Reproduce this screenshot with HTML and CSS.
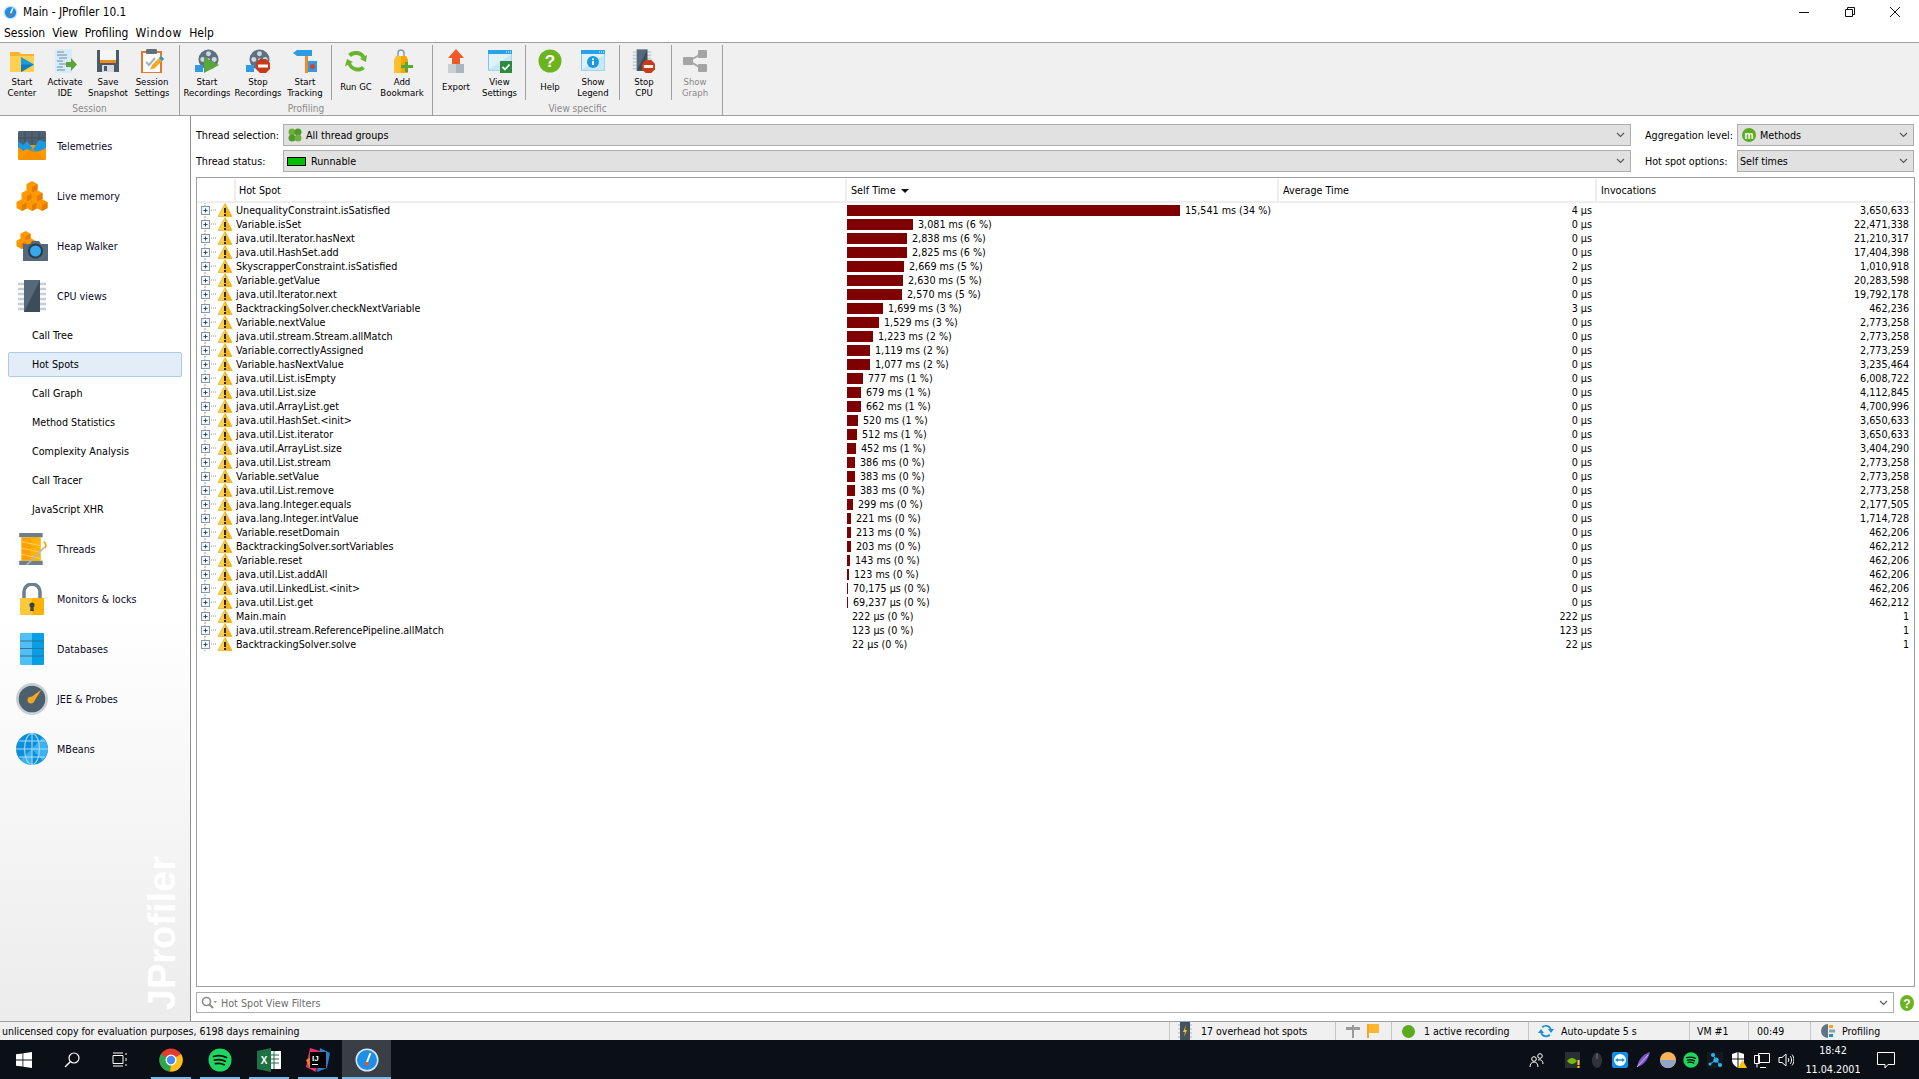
FILE: index.html
```html
<!DOCTYPE html>
<html lang="en">
<head>
<meta charset="utf-8">
<title>Main - JProfiler 10.1</title>
<link rel="stylesheet" href="styles.css">
</head>
<body>
<svg class="sprite" xmlns="http://www.w3.org/2000/svg">
  <defs>
    <symbol id="node" viewBox="0 0 37 14">
      <path d="M8 0v3M8 11v3M12 7h7" stroke="#999" stroke-width="1" stroke-dasharray="1 1" fill="none"/>
      <rect x="4.500" y="3.500" width="8" height="8" fill="#f4f6f8" stroke="#8a97a3"/>
      <path d="M6.500 7.500h4M8.500 5.500v4" stroke="#2c4a6b" fill="none"/>
      <path d="M28 0.500L35 13.500H21Z" fill="#ffd24a" stroke="#d9a21b" stroke-width=".6"/>
      <path d="M28 0.500L35 13.500H28Z" fill="#f9b312"/>
      <rect x="27" y="5" width="2" height="5" fill="#2b2b2b"/><rect x="27" y="11" width="2" height="2" fill="#2b2b2b"/>
    </symbol>
    <symbol id="cube" viewBox="0 0 12 12">
      <path d="M6 0l5.500 3v6L6 12 .5 9V3Z" fill="#ff9800"/>
      <path d="M6 6l5.500-3v6L6 12Z" fill="#e57c00"/>
    </symbol>
    <symbol id="stop" viewBox="0 0 14 14">
      <path d="M4 0h6l4 4v6l-4 4H4l-4-4V4Z" fill="#c93a1a"/>
      <rect x="2" y="5.500" width="10" height="3" fill="#fff"/>
    </symbol>
    <symbol id="reel" viewBox="0 0 22 22">
      <circle cx="11" cy="11" r="10.500" fill="#5f7180"/>
      <circle cx="11" cy="5" r="2.600" fill="#cfd8dc"/><circle cx="11" cy="17" r="2.600" fill="#cfd8dc"/>
      <circle cx="5" cy="11" r="2.600" fill="#cfd8dc"/><circle cx="17" cy="11" r="2.600" fill="#cfd8dc"/>
      <circle cx="11" cy="11" r="1.400" fill="#cfd8dc"/>
    </symbol>
    <symbol id="chip" viewBox="0 0 30 32">
      <path d="M1 4h28M1 9h28M1 14h28M1 19h28M1 24h28M1 29h28" stroke="#c4ced4" stroke-width="2.400" fill="none"/>
      <rect x="7" y="0" width="16" height="32" fill="#56697a"/>
      <path d="M23 0v32H7Z" fill="#3c4c5a"/>
    </symbol>
    <symbol id="win" viewBox="0 0 24 21">
      <rect x=".5" y=".5" width="23" height="20" fill="#dff1fb" stroke="#7cc4ee"/>
      <rect x="0" y="0" width="24" height="4" fill="#29a3e8"/>
      <path d="M18 2h1M20 2h1M22 2h1" stroke="#fff"/>
      <path d="M0 20L24 4V21H0Z" fill="#b7e0f7" opacity=".6"/>
    </symbol>
    <symbol id="chev" viewBox="0 0 9 6"><path d="M1 1l3.500 3.500L8 1" fill="none" stroke="#555" stroke-width="1.100"/></symbol>
  </defs>
</svg>

<header class="titlebar">
  <svg class="app-ico" viewBox="0 0 16 16"><circle cx="8" cy="8" r="7.500" fill="#cfe6f7"/><circle cx="8" cy="8" r="6" fill="#1f8fe6"/><path d="M10.500 3.500L8 9" stroke="#fff" stroke-width="1.600"/><circle cx="7.800" cy="10" r="1.300" fill="#e8532b"/></svg>
  <span class="title-text">Main - JProfiler 10.1</span>
  <div class="winctl">
    <svg class="wc" viewBox="0 0 12 12"><path d="M1 6.500h10" stroke="#111"/></svg>
    <svg class="wc" viewBox="0 0 12 12"><path d="M1.500 3.500h7v7h-7zM3.500 3.500v-2h7v7h-2" fill="none" stroke="#111"/></svg>
    <svg class="wc" viewBox="0 0 12 12"><path d="M1 1l10 10M11 1L1 11" stroke="#111"/></svg>
  </div>
</header>

<nav class="menubar">
  <span>Session</span><span>View</span><span>Profiling</span><span class="wide">Window</span><span>Help</span>
</nav>

<section class="toolbar">
  <div class="tgroup g-session">
    <div class="tbtns">
      <div class="tbtn w44"><svg class="ticon" viewBox="0 0 24 24"><path d="M0 3h9l2 2h13v18H0Z" fill="#f9b233"/><path d="M0 7h24v16H0Z" fill="#fdd04f"/><path d="M11 8l13 7.500-13 7.500Z" fill="#1a9ae0"/><path d="M11 15.500h13L11 23Z" fill="#0e7cc0"/></svg><span class="tlabel">Start<br>Center</span></div>
      <div class="tbtn w42"><svg class="ticon" viewBox="0 0 24 24"><rect x="2" y="0" width="17" height="24" fill="#d6ecfa"/><path d="M4 3h7M4 6h10M6 9h8M4 12h6M6 15h7M4 18h6M4 21h8" stroke="#6f8aa0"/><path d="M13 13h5V9l6 6.500-6 6.500v-4h-5Z" fill="#5aa63a"/></svg><span class="tlabel">Activate<br>IDE</span></div>
      <div class="tbtn w44"><svg class="ticon" viewBox="0 0 24 24"><path d="M1 1h22v22H1Z" fill="#4a5a68"/><rect x="4" y="1" width="16" height="10" fill="#f5f5f5"/><rect x="4" y="11" width="16" height="3" fill="#f28a1a"/><rect x="6" y="16" width="12" height="7" fill="#d5dbe0"/><rect x="8" y="17" width="3" height="5" fill="#4a5a68"/></svg><span class="tlabel">Save<br>Snapshot</span></div>
      <div class="tbtn w44"><svg class="ticon" viewBox="0 0 24 24"><rect x="2" y="3" width="19" height="21" fill="#fff" stroke="#e8762b" stroke-width="2"/><rect x="6" y="0" width="11" height="5" rx="1" fill="#5f7180"/><path d="M6 13l3 3 6-7" fill="none" stroke="#9fb2c0" stroke-width="2"/><path d="M10 21l2-5L21 7l3 3-9 9Z" fill="#f5a623"/><path d="M21 7l3 3-2 2-3-3Z" fill="#1a9ae0"/></svg><span class="tlabel">Session<br>Settings</span></div>
    </div>
    <div class="tname">Session</div>
  </div>
  <div class="tgroup g-profiling">
    <div class="tbtns">
      <div class="tbtn w54"><svg class="ticon" viewBox="0 0 24 24"><use href="#reel" x="3" y="0" width="21" height="21"/><rect x="0" y="16" width="8" height="7" fill="#2f9be0"/><path d="M9 8l15 8-15 8Z" fill="#5aa63a"/></svg><span class="tlabel">Start<br>Recordings</span></div>
      <div class="tbtn w48"><svg class="ticon" viewBox="0 0 24 24"><use href="#reel" x="3" y="0" width="21" height="21"/><rect x="0" y="16" width="8" height="7" fill="#2f9be0"/><use href="#stop" x="10" y="10" width="14" height="14"/></svg><span class="tlabel">Stop<br>Recordings</span></div>
      <div class="tbtn w46"><svg class="ticon" viewBox="0 0 24 24"><rect x="12" y="1" width="3" height="23" fill="#ef8b2c"/><path d="M0 4l4-3h15v6H4Z" fill="#2f9be0"/><rect x="15" y="12" width="9" height="11" fill="#2f9be0"/><circle cx="19.500" cy="17.500" r="2.500" fill="#d8402a"/></svg><span class="tlabel">Start<br>Tracking</span></div>
      <div class="tsep"></div>
      <div class="tbtn w48"><svg class="ticon" viewBox="0 0 24 24"><path d="M12 2a10 10 0 0 1 9 5l2-1-1 7-6-3 2-1a7 7 0 0 0-6-3 7 7 0 0 0-5 2L4 5a10 10 0 0 1 8-3ZM3 10l6 3-2 1a7 7 0 0 0 11 3l3 3a11 11 0 0 1-17-4l-3 1Z" fill="#6ab42e"/></svg><span class="tlabel">Run GC</span></div>
      <div class="tbtn w44"><svg class="ticon" viewBox="0 0 24 24"><path d="M8 9V4a3 3 0 0 1 6 0v5" fill="none" stroke="#8d9aa5" stroke-width="1.500"/><path d="M6 7h10l2 4v13H4V11Z" fill="#fcc02e"/><path d="M11 7h5l2 4v13h-7Z" fill="#f5a800"/><path d="M15 13h3v3h5v3h-5v4h-3v-4h-4v-3h4Z" fill="#5aa63a"/></svg><span class="tlabel">Add<br>Bookmark</span></div>
    </div>
    <div class="tname">Profiling</div>
  </div>
  <div class="tgroup g-view">
    <div class="tbtns">
      <div class="tbtn w46"><svg class="ticon" viewBox="0 0 24 24"><path d="M12 0l8 9h-4v6H8V9H4Z" fill="#ef5a2a"/><path d="M4 15h16v9H4Z" fill="#c8d0d6"/><path d="M12 15h8v9h-8Z" fill="#aab5bd"/></svg><span class="tlabel">Export</span></div>
      <div class="tbtn w41"><svg class="ticon" viewBox="0 0 24 24"><use href="#win" x="0" y="1" width="24" height="21"/><rect x="12" y="12" width="12" height="12" fill="#2e8b3d"/><path d="M14.500 18l2.500 2.500 4.500-5" stroke="#fff" stroke-width="1.800" fill="none"/></svg><span class="tlabel">View<br>Settings</span></div>
      <div class="tsep sep-view"></div>
      <div class="tbtn w48"><svg class="ticon" viewBox="0 0 24 24"><circle cx="12" cy="12" r="11.500" fill="#6cb41e"/><text class="q" x="12" y="18" text-anchor="middle">?</text></svg><span class="tlabel">Help</span></div>
      <div class="tbtn w38"><svg class="ticon" viewBox="0 0 24 24"><use href="#win" x="0" y="1" width="24" height="21"/><circle cx="12" cy="13" r="6" fill="#1a9ae0"/><rect x="11" y="12" width="2" height="4" fill="#fff"/><rect x="11" y="9.500" width="2" height="1.600" fill="#fff"/></svg><span class="tlabel">Show<br>Legend</span></div>
      <div class="tsep sep-legend"></div>
      <div class="tbtn w48"><svg class="ticon" viewBox="0 0 24 24"><use href="#chip" x="0" y="0" width="20" height="22"/><use href="#stop" x="10" y="11" width="13" height="13"/></svg><span class="tlabel">Stop<br>CPU</span></div>
      <div class="tsep"></div>
      <div class="tbtn w46 off"><svg class="ticon" viewBox="0 0 24 24"><path d="M6 12L18 5M6 12l12 7" stroke="#a4a4a4" stroke-width="2"/><rect x="0" y="8" width="10" height="8" rx="1" fill="#a4a4a4"/><rect x="15" y="1" width="9" height="8" rx="1" fill="#a4a4a4"/><rect x="15" y="15" width="9" height="8" rx="1" fill="#a4a4a4"/></svg><span class="tlabel">Show<br>Graph</span></div>
    </div>
    <div class="tname">View specific</div>
  </div>
</section>

<main class="main">
  <aside class="sidebar">
    <div class="nav">
      <div class="nav-item"><svg class="nav-ico" viewBox="0 0 32 32"><rect x="2" y="1" width="28" height="29" rx="1.500" fill="#ff9800"/><path d="M2 2.500a1.500 1.500 0 0 1 1.500-1.500h25a1.500 1.500 0 0 1 1.500 1.500V15H2Z" fill="#4f6170"/><path d="M9 1v14M16 1v14M23 1v14M2 8h28" stroke="#3f505e"/><path d="M2 11l5 4 4-4 6 8 6-9 7 2v6l-6 3-7 1-6-3-4 2-5-4Z" fill="#1a9ae0"/><path d="M2 30l14-12 14 12Z" fill="#f28c00" opacity=".6"/></svg><span>Telemetries</span></div>
      <div class="nav-item"><svg class="nav-ico" viewBox="0 0 32 30"><use href="#cube" x="10" y="0" width="12" height="12"/><use href="#cube" x="5" y="9" width="12" height="12"/><use href="#cube" x="15" y="9" width="12" height="12"/><use href="#cube" x="0" y="18" width="12" height="12"/><use href="#cube" x="10" y="18" width="12" height="12"/><use href="#cube" x="20" y="18" width="12" height="12"/></svg><span>Live memory</span></div>
      <div class="nav-item"><svg class="nav-ico" viewBox="0 0 32 30"><use href="#cube" x="4" y="0" width="11" height="11"/><use href="#cube" x="0" y="7" width="11" height="11"/><use href="#cube" x="9" y="7" width="11" height="11"/><path d="M7 13h7l2-3h7l2 3h7v17H7Z" fill="#56697a"/><circle cx="19.500" cy="20" r="7.500" fill="#2b3a47"/><circle cx="19.500" cy="20" r="5.500" fill="#35a8ee"/></svg><span>Heap Walker</span></div>
      <div class="nav-item"><svg class="nav-ico" viewBox="0 0 30 32"><use href="#chip" x="0" y="0" width="30" height="32"/></svg><span>CPU views</span></div>
      <ul class="sub">
        <li>Call Tree</li>
        <li class="active">Hot Spots</li>
        <li>Call Graph</li>
        <li>Method Statistics</li>
        <li>Complexity Analysis</li>
        <li>Call Tracer</li>
        <li>JavaScript XHR</li>
      </ul>
      <div class="nav-item"><svg class="nav-ico" viewBox="0 0 30 30"><rect x="3" y="0" width="22" height="4" fill="#6d7f8d"/><rect x="3" y="26" width="22" height="4" fill="#6d7f8d"/><rect x="5" y="4" width="18" height="22" fill="#ffa000"/><path d="M14 4h9v22h-9Z" fill="#ffb300"/><path d="M5 8l18 4M5 14l18 4M5 20l18 4" stroke="#ffcf5e"/><path d="M26 8c2 2 3 4 1 6" stroke="#ffa000" fill="none" stroke-width="1.500"/><path d="M10 30l17-17" stroke="#aeb8bf" stroke-width="1.500"/></svg><span>Threads</span></div>
      <div class="nav-item"><svg class="nav-ico" viewBox="0 0 30 32"><path d="M7 16V9a8 8 0 0 1 16 0v7" fill="none" stroke="#6d7f8d" stroke-width="3.500"/><rect x="3" y="15" width="24" height="17" rx="1" fill="#ffc93a"/><path d="M15 15h12v17H15Z" fill="#ffb300"/><circle cx="15" cy="22" r="2.600" fill="#36444f"/><path d="M13.800 23h2.400l.8 5h-4Z" fill="#36444f"/></svg><span>Monitors &amp; locks</span></div>
      <div class="nav-item"><svg class="nav-ico" viewBox="0 0 30 32"><path d="M3 1a1 1 0 0 1 1-1h11v32H4a1 1 0 0 1-1-1Z" fill="#4fc0f5"/><path d="M15 0h11a1 1 0 0 1 1 1v30a1 1 0 0 1-1 1H15Z" fill="#049fe6"/><path d="M3 8h24M3 15.500h24M3 23h24" stroke="#3a6f8e" stroke-width="1.200"/></svg><span>Databases</span></div>
      <div class="nav-item"><svg class="nav-ico" viewBox="0 0 30 30"><circle cx="15" cy="15" r="15" fill="#c9d0d4"/><circle cx="15" cy="15" r="12.500" fill="#4c5f6e"/><path d="M24 6L17 17l-4-3Z" fill="#f5a623"/><circle cx="14" cy="16" r="3.200" fill="#f5a623"/></svg><span>JEE &amp; Probes</span></div>
      <div class="nav-item"><svg class="nav-ico" viewBox="0 0 30 30"><circle cx="15" cy="15" r="15" fill="#0e8fdc"/><path d="M15 15L25 4a15 15 0 0 1 0 22ZM15 15v15a15 15 0 0 1-11-5Z" fill="#3cb1f0"/><g fill="none" stroke="#a5defa" stroke-width="1"><ellipse cx="15" cy="15" rx="7" ry="14.500"/><path d="M15 0v30M0 15h30M3 7.500h24M3 22.500h24"/></g></svg><span>MBeans</span></div>
    </div>
    <div class="watermark">JProfiler</div>
  </aside>

  <div class="content">
    <div class="form-row">
      <label class="lab-a">Thread selection:</label>
      <div class="combo combo-wide"><svg class="combo-ico" viewBox="0 0 14 14"><circle cx="4" cy="4" r="3.500" fill="#6bb13b"/><circle cx="10" cy="4" r="3.500" fill="#4f9a2a"/><circle cx="4" cy="10" r="3.500" fill="#4f9a2a"/><circle cx="10" cy="10" r="3.500" fill="#6bb13b"/></svg><span class="ctext">All thread groups</span><svg class="chev"><use href="#chev"/></svg></div>
      <label class="lab-b">Aggregation level:</label>
      <div class="combo combo-narrow"><svg class="combo-ico" viewBox="0 0 14 14"><circle cx="7" cy="7" r="7" fill="#5cab1f"/><text class="m" x="7" y="10.500" text-anchor="middle">m</text></svg><span class="ctext">Methods</span><svg class="chev"><use href="#chev"/></svg></div>
    </div>
    <div class="form-row">
      <label class="lab-a">Thread status:</label>
      <div class="combo combo-wide runnable"><span class="swatch"></span><span class="ctext">Runnable</span><svg class="chev"><use href="#chev"/></svg></div>
      <label class="lab-b">Hot spot options:</label>
      <div class="combo combo-narrow plain"><span class="ctext">Self times</span><svg class="chev"><use href="#chev"/></svg></div>
    </div>

    <div class="table">
      <div class="thead">
        <div class="c-tree"></div>
        <div class="c-name th th-first">Hot Spot</div>
        <div class="c-self th">Self Time <i class="sort"></i></div>
        <div class="c-avg th">Average Time</div>
        <div class="c-inv th">Invocations</div>
      </div>
      <div class="row"><svg class="c-tree"><use href="#node"/></svg><div class="c-name">UnequalityConstraint.isSatisfied</div><div class="c-self"><i class="bar" style="width:333px"></i>15,541 ms (34 %)</div><div class="c-avg">4 µs</div><div class="c-inv">3,650,633</div></div>
      <div class="row"><svg class="c-tree"><use href="#node"/></svg><div class="c-name">Variable.isSet</div><div class="c-self"><i class="bar" style="width:66px"></i>3,081 ms (6 %)</div><div class="c-avg">0 µs</div><div class="c-inv">22,471,338</div></div>
      <div class="row"><svg class="c-tree"><use href="#node"/></svg><div class="c-name">java.util.Iterator.hasNext</div><div class="c-self"><i class="bar" style="width:60px"></i>2,838 ms (6 %)</div><div class="c-avg">0 µs</div><div class="c-inv">21,210,317</div></div>
      <div class="row"><svg class="c-tree"><use href="#node"/></svg><div class="c-name">java.util.HashSet.add</div><div class="c-self"><i class="bar" style="width:60px"></i>2,825 ms (6 %)</div><div class="c-avg">0 µs</div><div class="c-inv">17,404,398</div></div>
      <div class="row"><svg class="c-tree"><use href="#node"/></svg><div class="c-name">SkyscrapperConstraint.isSatisfied</div><div class="c-self"><i class="bar" style="width:57px"></i>2,669 ms (5 %)</div><div class="c-avg">2 µs</div><div class="c-inv">1,010,918</div></div>
      <div class="row"><svg class="c-tree"><use href="#node"/></svg><div class="c-name">Variable.getValue</div><div class="c-self"><i class="bar" style="width:56px"></i>2,630 ms (5 %)</div><div class="c-avg">0 µs</div><div class="c-inv">20,283,598</div></div>
      <div class="row"><svg class="c-tree"><use href="#node"/></svg><div class="c-name">java.util.Iterator.next</div><div class="c-self"><i class="bar" style="width:55px"></i>2,570 ms (5 %)</div><div class="c-avg">0 µs</div><div class="c-inv">19,792,178</div></div>
      <div class="row"><svg class="c-tree"><use href="#node"/></svg><div class="c-name">BacktrackingSolver.checkNextVariable</div><div class="c-self"><i class="bar" style="width:36px"></i>1,699 ms (3 %)</div><div class="c-avg">3 µs</div><div class="c-inv">462,236</div></div>
      <div class="row"><svg class="c-tree"><use href="#node"/></svg><div class="c-name">Variable.nextValue</div><div class="c-self"><i class="bar" style="width:32px"></i>1,529 ms (3 %)</div><div class="c-avg">0 µs</div><div class="c-inv">2,773,258</div></div>
      <div class="row"><svg class="c-tree"><use href="#node"/></svg><div class="c-name">java.util.stream.Stream.allMatch</div><div class="c-self"><i class="bar" style="width:26px"></i>1,223 ms (2 %)</div><div class="c-avg">0 µs</div><div class="c-inv">2,773,258</div></div>
      <div class="row"><svg class="c-tree"><use href="#node"/></svg><div class="c-name">Variable.correctlyAssigned</div><div class="c-self"><i class="bar" style="width:23px"></i>1,119 ms (2 %)</div><div class="c-avg">0 µs</div><div class="c-inv">2,773,259</div></div>
      <div class="row"><svg class="c-tree"><use href="#node"/></svg><div class="c-name">Variable.hasNextValue</div><div class="c-self"><i class="bar" style="width:23px"></i>1,077 ms (2 %)</div><div class="c-avg">0 µs</div><div class="c-inv">3,235,464</div></div>
      <div class="row"><svg class="c-tree"><use href="#node"/></svg><div class="c-name">java.util.List.isEmpty</div><div class="c-self"><i class="bar" style="width:16px"></i>777 ms (1 %)</div><div class="c-avg">0 µs</div><div class="c-inv">6,008,722</div></div>
      <div class="row"><svg class="c-tree"><use href="#node"/></svg><div class="c-name">java.util.List.size</div><div class="c-self"><i class="bar" style="width:14px"></i>679 ms (1 %)</div><div class="c-avg">0 µs</div><div class="c-inv">4,112,845</div></div>
      <div class="row"><svg class="c-tree"><use href="#node"/></svg><div class="c-name">java.util.ArrayList.get</div><div class="c-self"><i class="bar" style="width:14px"></i>662 ms (1 %)</div><div class="c-avg">0 µs</div><div class="c-inv">4,700,996</div></div>
      <div class="row"><svg class="c-tree"><use href="#node"/></svg><div class="c-name">java.util.HashSet.&lt;init&gt;</div><div class="c-self"><i class="bar" style="width:11px"></i>520 ms (1 %)</div><div class="c-avg">0 µs</div><div class="c-inv">3,650,633</div></div>
      <div class="row"><svg class="c-tree"><use href="#node"/></svg><div class="c-name">java.util.List.iterator</div><div class="c-self"><i class="bar" style="width:10px"></i>512 ms (1 %)</div><div class="c-avg">0 µs</div><div class="c-inv">3,650,633</div></div>
      <div class="row"><svg class="c-tree"><use href="#node"/></svg><div class="c-name">java.util.ArrayList.size</div><div class="c-self"><i class="bar" style="width:9px"></i>452 ms (1 %)</div><div class="c-avg">0 µs</div><div class="c-inv">3,404,290</div></div>
      <div class="row"><svg class="c-tree"><use href="#node"/></svg><div class="c-name">java.util.List.stream</div><div class="c-self"><i class="bar" style="width:8px"></i>386 ms (0 %)</div><div class="c-avg">0 µs</div><div class="c-inv">2,773,258</div></div>
      <div class="row"><svg class="c-tree"><use href="#node"/></svg><div class="c-name">Variable.setValue</div><div class="c-self"><i class="bar" style="width:8px"></i>383 ms (0 %)</div><div class="c-avg">0 µs</div><div class="c-inv">2,773,258</div></div>
      <div class="row"><svg class="c-tree"><use href="#node"/></svg><div class="c-name">java.util.List.remove</div><div class="c-self"><i class="bar" style="width:8px"></i>383 ms (0 %)</div><div class="c-avg">0 µs</div><div class="c-inv">2,773,258</div></div>
      <div class="row"><svg class="c-tree"><use href="#node"/></svg><div class="c-name">java.lang.Integer.equals</div><div class="c-self"><i class="bar" style="width:6px"></i>299 ms (0 %)</div><div class="c-avg">0 µs</div><div class="c-inv">2,177,505</div></div>
      <div class="row"><svg class="c-tree"><use href="#node"/></svg><div class="c-name">java.lang.Integer.intValue</div><div class="c-self"><i class="bar" style="width:4px"></i>221 ms (0 %)</div><div class="c-avg">0 µs</div><div class="c-inv">1,714,728</div></div>
      <div class="row"><svg class="c-tree"><use href="#node"/></svg><div class="c-name">Variable.resetDomain</div><div class="c-self"><i class="bar" style="width:4px"></i>213 ms (0 %)</div><div class="c-avg">0 µs</div><div class="c-inv">462,206</div></div>
      <div class="row"><svg class="c-tree"><use href="#node"/></svg><div class="c-name">BacktrackingSolver.sortVariables</div><div class="c-self"><i class="bar" style="width:4px"></i>203 ms (0 %)</div><div class="c-avg">0 µs</div><div class="c-inv">462,212</div></div>
      <div class="row"><svg class="c-tree"><use href="#node"/></svg><div class="c-name">Variable.reset</div><div class="c-self"><i class="bar" style="width:3px"></i>143 ms (0 %)</div><div class="c-avg">0 µs</div><div class="c-inv">462,206</div></div>
      <div class="row"><svg class="c-tree"><use href="#node"/></svg><div class="c-name">java.util.List.addAll</div><div class="c-self"><i class="bar" style="width:2px"></i>123 ms (0 %)</div><div class="c-avg">0 µs</div><div class="c-inv">462,206</div></div>
      <div class="row"><svg class="c-tree"><use href="#node"/></svg><div class="c-name">java.util.LinkedList.&lt;init&gt;</div><div class="c-self"><i class="bar" style="width:1px"></i>70,175 µs (0 %)</div><div class="c-avg">0 µs</div><div class="c-inv">462,206</div></div>
      <div class="row"><svg class="c-tree"><use href="#node"/></svg><div class="c-name">java.util.List.get</div><div class="c-self"><i class="bar" style="width:1px"></i>69,237 µs (0 %)</div><div class="c-avg">0 µs</div><div class="c-inv">462,212</div></div>
      <div class="row"><svg class="c-tree"><use href="#node"/></svg><div class="c-name">Main.main</div><div class="c-self nobar">222 µs (0 %)</div><div class="c-avg">222 µs</div><div class="c-inv">1</div></div>
      <div class="row"><svg class="c-tree"><use href="#node"/></svg><div class="c-name">java.util.stream.ReferencePipeline.allMatch</div><div class="c-self nobar">123 µs (0 %)</div><div class="c-avg">123 µs</div><div class="c-inv">1</div></div>
      <div class="row"><svg class="c-tree"><use href="#node"/></svg><div class="c-name">BacktrackingSolver.solve</div><div class="c-self nobar">22 µs (0 %)</div><div class="c-avg">22 µs</div><div class="c-inv">1</div></div>
    </div>

    <div class="filter-row">
      <div class="filter">
        <svg class="search" viewBox="0 0 16 14"><circle cx="5.500" cy="5.500" r="4" fill="none" stroke="#8b8b8b" stroke-width="1.600"/><path d="M8.500 8.500l3.500 3.500" stroke="#8b8b8b" stroke-width="2"/><path d="M12.500 5h3.500l-1.750 2Z" fill="#8b8b8b"/></svg>
        <span class="ph">Hot Spot View Filters</span>
        <svg class="chev"><use href="#chev"/></svg>
      </div>
      <svg class="filter-help" viewBox="0 0 14 16"><ellipse cx="7" cy="8" rx="7" ry="8" fill="#6cb41e"/><text class="q2" x="7" y="12.500" text-anchor="middle">?</text></svg>
    </div>
  </div>
</main>

<footer class="status">
  <div class="st st-msg">unlicensed copy for evaluation purposes, 6198 days remaining</div>
  <div class="st st-1"><svg class="st-ico" viewBox="0 0 14 18"><rect x="2" y="0" width="10" height="18" fill="#44525e"/><path d="M0 3h2M0 7h2M0 11h2M0 15h2M12 3h2M12 7h2M12 11h2M12 15h2" stroke="#aab5bd"/><path d="M8 3L5 10h2l-1 5 3-7H7Z" fill="#ffc21a"/></svg>17 overhead hot spots</div>
  <div class="st st-2"><svg class="st-ico2" viewBox="0 0 14 14"><rect x="6" y="1" width="2" height="13" fill="#9a9a9a"/><path d="M0 3h14v3H0Z" fill="#9a9a9a"/></svg><svg class="st-ico2" viewBox="0 0 14 14"><rect x="1" y="0" width="2" height="14" fill="#f5a623"/><path d="M3 0h10v9H3Z" fill="#ffb52e"/></svg></div>
  <div class="st st-3"><i class="dot"></i>1 active recording</div>
  <div class="st st-4"><svg class="st-ico3" viewBox="0 0 16 16"><path d="M8 2a6 6 0 0 1 5.600 4H16l-3 4-3-4h1.700A4 4 0 0 0 5 5L3.500 3.600A6 6 0 0 1 8 2ZM0 10l3-4 3 4H4.300A4 4 0 0 0 11 11l1.500 1.400A6 6 0 0 1 2.400 10Z" fill="#1a8fd8"/></svg>Auto-update 5 s</div>
  <div class="st st-5">VM #1</div>
  <div class="st st-6">00:49</div>
  <div class="st st-7"><svg class="st-ico3" viewBox="0 0 16 16"><path d="M9 1a7 7 0 0 0 0 14Z" fill="#607382"/><rect x="10" y="2" width="4" height="3" fill="#f5a623"/><rect x="10" y="6.500" width="6" height="3" fill="#8fa0ab"/><rect x="10" y="11" width="4" height="3" fill="#1a8fd8"/></svg>Profiling</div>
</footer>

<div class="taskbar">
  <div class="tb-btn"><svg class="tb-ico16" viewBox="0 0 16 16"><path d="M0 2.300L6.500 1.400V7.600H0ZM7.300 1.300L16 0V7.600H7.300ZM0 8.400H6.500V14.600L0 13.700ZM7.300 8.400H16V16L7.300 14.700Z" fill="#fff"/></svg></div>
  <div class="tb-btn"><svg class="tb-ico16" viewBox="0 0 16 16"><circle cx="10" cy="6" r="5" fill="none" stroke="#fff" stroke-width="1.200"/><path d="M6.500 9.500L1 15" stroke="#fff" stroke-width="1.400"/></svg></div>
  <div class="tb-btn"><svg class="tb-ico16" viewBox="0 0 16 16"><path d="M1 3.500h10v8H1ZM1 1h10M1 14h10M14 1v2M14 6v3M14 12v2" fill="none" stroke="#fff"/></svg></div>
  <div class="tb-btn run first"><svg class="tb-ico" viewBox="0 0 24 24"><circle cx="12" cy="12" r="11.500" fill="#e33b2e"/><path d="M12 12L22 6a11.500 11.500 0 0 1-11 17.500Z" fill="#fbc116"/><path d="M12 12L11 23.500A11.500 11.500 0 0 1 2 6Z" fill="#2ea64a"/><circle cx="12" cy="12" r="5.500" fill="#fff"/><circle cx="12" cy="12" r="4.200" fill="#4a8af4"/></svg></div>
  <div class="tb-btn run"><svg class="tb-ico" viewBox="0 0 24 24"><circle cx="12" cy="12" r="11.500" fill="#1ed760"/><path d="M5.500 8.500c4-1.200 9-1 13 1M6.500 12.200c3.500-1 7.500-.7 10.800 1M7.500 15.700c3-.7 6-.5 8.600 1" fill="none" stroke="#111" stroke-width="1.800" stroke-linecap="round"/></svg></div>
  <div class="tb-btn run"><svg class="tb-ico" viewBox="0 0 24 24"><rect x="9" y="3" width="15" height="18" fill="#fff"/><path d="M12 7h10M12 11h10M12 15h10M17 3v18" stroke="#1e7145"/><path d="M0 3L14 0v24L0 21Z" fill="#1e7145"/><text class="xl" x="7" y="16" text-anchor="middle">X</text></svg></div>
  <div class="tb-btn run"><svg class="tb-ico" viewBox="0 0 24 24"><path d="M4 0l10 3-4 21-10-5Z" fill="#e5336e"/><path d="M14 0l10 5-3 15-10 4Z" fill="#2c7ccf"/><path d="M0 12l6-4 4 10-6 2Z" fill="#f07d1b"/><rect x="4" y="4" width="16" height="16" fill="#000"/><text class="ij" x="6" y="13">IJ</text><rect x="6" y="16" width="6" height="1" fill="#fff"/></svg></div>
  <div class="tb-btn run active"><svg class="tb-ico" viewBox="0 0 24 24"><circle cx="12" cy="12" r="11.500" fill="#d7e9f7"/><circle cx="12" cy="12" r="10" fill="#1f8fe6"/><path d="M15.500 5L12 14" stroke="#fff" stroke-width="2"/><circle cx="11.800" cy="16" r="2" fill="#e8532b"/></svg></div>
  <div class="tray">
    <svg class="tray-ico people" viewBox="0 0 16 16"><circle cx="5" cy="7" r="2.300" fill="none" stroke="#fff"/><circle cx="11" cy="4" r="2.300" fill="none" stroke="#fff"/><path d="M1 15c0-3 1.500-5 4-5s4 2 4 5M9 8c3-1 5 1 5 4" fill="none" stroke="#fff"/></svg>
    <div class="tray-icons">
      <svg class="tray-ico" viewBox="0 0 16 16"><rect width="15" height="16" fill="#2a2f33"/><path d="M2 9c3-4 7-4 10 0-3 4-7 4-10 0Z" fill="#76b900"/><rect x="12.500" y="8" width="2" height="5" fill="#ffd21a"/><rect x="12.500" y="14" width="2" height="2" fill="#ffd21a"/></svg>
      <svg class="tray-ico" viewBox="0 0 16 16"><ellipse cx="8" cy="8.500" rx="5" ry="7.500" fill="#30343a"/><path d="M8 1v6" stroke="#777"/></svg>
      <svg class="tray-ico" viewBox="0 0 16 16"><rect width="16" height="16" rx="2" fill="#0e8ee9"/><circle cx="8" cy="8" r="6" fill="#fff"/><path d="M3 8l3-2v1.300h4V6l3 2-3 2V8.700H6V10Z" fill="#0e8ee9"/></svg>
      <svg class="tray-ico" viewBox="0 0 16 16"><path d="M14 0C7 2 2 8 1 15c5-1 11-6 13-15Z" fill="#7a5ac8"/><path d="M1 15L12 3" stroke="#c8b8f0"/></svg>
      <svg class="tray-ico" viewBox="0 0 16 16"><circle cx="8" cy="8" r="8" fill="#f7b35c"/><path d="M0 8h16a8 8 0 0 1-16 0Z" fill="#8fa6c8"/></svg>
      <svg class="tray-ico" viewBox="0 0 24 24"><circle cx="12" cy="12" r="11.500" fill="#1ed760"/><path d="M5.500 8.500c4-1.200 9-1 13 1M6.500 12.200c3.500-1 7.500-.7 10.800 1M7.500 15.700c3-.7 6-.5 8.600 1" fill="none" stroke="#111" stroke-width="2" stroke-linecap="round"/></svg>
      <svg class="tray-ico" viewBox="0 0 16 16"><rect width="16" height="16" fill="#101a20"/><circle cx="6" cy="3" r="2" fill="#2fb5f0"/><circle cx="9" cy="8" r="2.600" fill="#2fb5f0"/><circle cx="13" cy="13" r="2" fill="#2fb5f0"/><circle cx="3" cy="12" r="1.500" fill="#2fb5f0"/><path d="M6 3l3 5 4 5M9 8l-6 4" stroke="#2fb5f0"/></svg>
      <svg class="tray-ico" viewBox="0 0 16 16"><path d="M7 0l6 2v6c0 4-3 6-6 8-3-2-6-4-6-8V2Z" fill="#fff"/><path d="M7 0v16M1 7h12" stroke="#111"/><path d="M11.500 8L16 16H7Z" fill="#ffc107"/></svg>
      <svg class="tray-ico" viewBox="0 0 16 16"><path d="M4.500 1.500h11v9h-11ZM.5 3.500h5v8h-5ZM3 11.500v4M6 15.500h6" fill="none" stroke="#fff"/></svg>
      <svg class="tray-ico" viewBox="0 0 16 16"><path d="M1 5.500h3L8 2v12L4 10.500H1Z" fill="none" stroke="#fff"/><path d="M10 6c1 1 1 3 0 4M12 4c2 2 2 6 0 8M14 2.500c2.500 3 2.500 8 0 11" fill="none" stroke="#fff"/></svg>
    </div>
    <div class="clock"><span>18:42</span><span>11.04.2001</span></div>
    <svg class="notif" viewBox="0 0 18 18"><path d="M.5 1.500h17v12H11l-3 3.500v-3.500H.5Z" fill="none" stroke="#fff"/></svg>
  </div>
</div>
</body>
</html>
```

FILE: styles.css
```css
* { box-sizing: border-box; }
html, body { margin: 0; padding: 0; }
body {
  width: 1919px;
  height: 1079px;
  overflow: hidden;
  display: flex;
  flex-direction: column;
  background: #fff;
  color: #000;
  font: 10.7px/14px "DejaVu Sans Condensed", "DejaVu Sans", "Liberation Sans", sans-serif;
}
.sprite { width: 0; height: 0; position: absolute; }
svg { display: block; flex: none; }
i { display: block; font-style: normal; }

.titlebar { height: 24px; display: flex; align-items: center; padding-left: 3px; }
.app-ico { width: 15px; height: 15px; }
.title-text { margin-left: 5px; font-size: 11.8px; }
.winctl { margin-left: auto; display: flex; gap: 33.500px; padding-right: 18px; }
.wc { width: 12px; height: 12px; }

.menubar { height: 18px; display: flex; gap: 7px; padding-left: 4px; align-items: center; font-size: 12px; }
.wide { letter-spacing: .7px; }

.toolbar {
  height: 74px;
  display: flex;
  background: #f0f0f0;
  border-top: 1px solid #a0a0a0;
  border-bottom: 1px solid #a0a0a0;
  padding-top: 2px;
}
.tgroup { display: flex; flex-direction: column; border-right: 1px solid #a0a0a0; }
.g-session { width: 180px; }
.g-profiling { width: 253px; }
.g-view { width: 290px; }
.tbtns { display: flex; height: 55px; flex: none; }
.tsep { width: 1px; background: #a0a0a0; margin: 0 0 0 3px; }
.sep-view { margin: 0 0 0 5px; }
.sep-legend { margin: 0 0 0 7px; }
.tbtn { display: flex; flex-direction: column; align-items: center; padding-top: 4px; text-align: center; }
.w38 { width: 38px; } .w41 { width: 41px; } .w42 { width: 42px; } .w44 { width: 44px; }
.w46 { width: 46px; } .w48 { width: 48px; } .w54 { width: 54px; }
.ticon { width: 24px; height: 24px; }
.tlabel { flex: 1; display: flex; align-items: center; font-size: 9.500px; line-height: 11px; white-space: nowrap; }
.off .tlabel { color: #888; }
.tname { flex: none; height: 15px; text-align: center; font-size: 10px; color: #8a8a8a; line-height: 17px; }
.q { font: bold 17px "Liberation Sans", sans-serif; fill: #fff; }
.q2 { font: bold 12px "Liberation Sans", sans-serif; fill: #fff; }
.m { font: bold 10px "Liberation Sans", sans-serif; fill: #fff; }
.xl { font: bold 10px "Liberation Sans", sans-serif; fill: #fff; }
.ij { font: bold 8px "Liberation Sans", sans-serif; fill: #fff; }

.main { flex: 1; min-height: 0; display: flex; }
.sidebar {
  width: 191px;
  position: relative;
  border-right: 1px solid #8f8f8f;
  background: linear-gradient(#fff 0, #fff 55%, #ececec 100%);
  overflow: hidden;
}
.nav { padding-top: 5px; }
.nav-item { height: 50px; display: flex; align-items: center; padding-left: 16px; color: #0a0a28; }
.nav-item span { padding-top: 2px; }
.nav-ico { width: 32px; height: 32px; margin-right: 9px; }
.sub { list-style: none; margin: 0; padding: 2px 0 2px 8px; display: flex; flex-direction: column; gap: 4px; }
.sub li { height: 25px; width: 174px; display: flex; align-items: center; padding-left: 23px; border: 1px solid transparent; }
.sub .active { background: #e2edf7; border-color: #a9cde6; border-radius: 2px; }
.watermark {
  position: absolute;
  left: 143px;
  bottom: 11px;
  writing-mode: vertical-rl;
  transform: rotate(180deg);
  font: bold 38px/38px "Liberation Sans", sans-serif;
  color: #fff;
}

.content { flex: 1; min-width: 0; display: flex; flex-direction: column; padding: 8px 4px 8px 5px; }
.form-row { display: flex; align-items: center; height: 22px; margin-bottom: 4px; padding-right: 1px; }
.form-row + .table { margin-top: 1px; }
.lab-a { width: 87px; padding-top: 2px; }
.lab-b { width: 92px; margin-left: 14px; padding-top: 2px; }
.ctext { padding-top: 2px; }
.combo {
  height: 22px;
  display: flex;
  align-items: center;
  background: #e1e1e1;
  border: 1px solid #adadad;
  padding-left: 4px;
}
.combo-wide { width: 1348px; }
.combo-narrow { width: 177px; }
.plain { padding-left: 2px; }
.runnable { padding-left: 2px; }
.combo-ico { width: 14px; height: 14px; margin-right: 4px; }
.swatch { width: 19px; height: 9px; background: #00c000; border: 1px solid #000; margin: 0 5px 0 1px; }
.chev { width: 9px; height: 6px; margin-left: auto; margin-right: 5px; }

.table { flex: 1; min-height: 0; border: 1px solid #a0a0a0; background: #fff; }
.thead { display: flex; height: 25px; padding-top: 1px; border-bottom: 2px solid #eeeeee; }
.row { display: flex; height: 14px; line-height: 14px; white-space: nowrap; }
.c-tree { width: 37px; height: 14px; flex: none; }
.c-name { width: 611px; padding-left: 2px; padding-top: 1px; flex: none; }
.c-self { width: 432px; padding-left: 2px; padding-top: 1px; display: flex; align-items: flex-start; gap: 5px; flex: none; }
.nobar { padding-left: 7px; }
.c-avg { width: 318px; text-align: right; padding-right: 3px; padding-top: 1px; flex: none; }
.c-inv { width: 318px; text-align: right; padding-right: 4px; padding-top: 1px; flex: none; }
.bar { height: 11px; margin-top: 1px; background: #7f0000; flex: none; }
.thead .c-tree { height: auto; }
.th { display: flex; align-items: center; justify-content: flex-start; gap: 5px; padding: 2px 0 0 4px; border-left: 2px solid #eeeeee; text-align: left; }
.th-first { padding-left: 3px; }
.sort { width: 0; height: 0; border: 4px solid transparent; border-top: 4px solid #111; border-bottom: 0; }

.filter-row { display: flex; margin-top: 5px; height: 21px; align-items: center; }
.filter { width: 1698px; height: 21px; display: flex; align-items: center; border: 1px solid #adadad; padding-left: 4px; background: #fff; }
.search { width: 16px; height: 14px; margin-right: 4px; }
.ph { color: #6e6e6e; padding-top: 2px; }
.filter-help { width: 14px; height: 16px; margin-left: 6px; }

.status { height: 19px; display: flex; background: #f0f0f0; border-top: 1px solid #a0a0a0; align-items: stretch; font-size: 10.500px; }
.st { display: flex; align-items: center; border-left: 1px solid #c6c6c6; }
.st-msg { width: 1169px; padding-left: 2px; border-left: 0; }
.st-1 { width: 166px; padding-left: 8px; }
.st-2 { width: 56px; padding-left: 10px; gap: 6px; }
.st-3 { width: 137px; padding-left: 10px; }
.st-4 { width: 161px; padding-left: 9px; }
.st-5 { width: 59px; padding-left: 7px; }
.st-6 { width: 62px; padding-left: 8px; }
.st-7 { flex: 1; padding-left: 8px; }
.st-ico { width: 14px; height: 18px; margin-right: 9px; }
.st-ico2 { width: 14px; height: 14px; }
.st-ico3 { width: 16px; height: 16px; margin-right: 7px; }
.dot { width: 13px; height: 13px; border-radius: 50%; background: #5cab1f; margin-right: 9px; }

.taskbar { height: 39px; display: flex; background: #0a1016; align-items: stretch; }
.tb-btn { width: 48px; display: flex; align-items: center; justify-content: center; position: relative; }
.run { width: 49px; }
.first { margin-left: 2px; }
.run::after { content: ""; position: absolute; left: 5px; right: 4px; bottom: 0; height: 2px; background: #76b9ed; }
.active { background: #3a3f45; }
.active::after { left: 0; right: 0; }
.tb-ico { width: 24px; height: 24px; }
.tb-ico16 { width: 16px; height: 16px; }
.tray { margin-left: auto; display: flex; align-items: center; padding-right: 15px; }
.tray-ico { width: 16px; height: 16px; }
.people { margin-right: 16px; }
.tray-icons { display: flex; gap: 7.700px; padding-right: 4px; margin-left: 4px; }
.clock { width: 70px; display: flex; flex-direction: column; align-items: center; color: #fff; line-height: 19px; }
.notif { width: 18px; height: 18px; margin: 0 9px; }
```
